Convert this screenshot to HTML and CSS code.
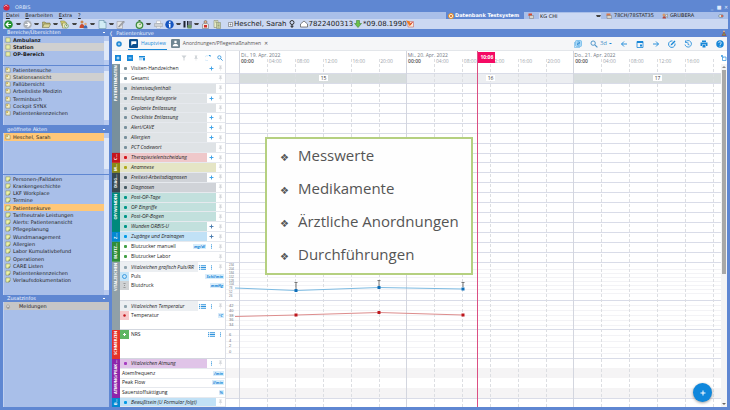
FILE: index.html
```html
<!DOCTYPE html>
<html lang="de">
<head>
<meta charset="utf-8">
<title>ORBIS</title>
<link rel="stylesheet" href="styles.css">
</head>
<body>
<svg class="defs" aria-hidden="true">
  <defs>
    <symbol id="back" viewBox="0 0 18 18"><circle cx="9" cy="9" r="8.500" fill="#238f31"/><path d="M14 9H5M9 4.500L4.500 9L9 13.500" fill="none" stroke="#fff" stroke-width="2.400"/></symbol>
    <symbol id="fwd" viewBox="0 0 18 18"><circle cx="9" cy="9" r="8.500" fill="#adb2b9"/><path d="M4 9h9M9 4.500L13.500 9L9 13.500" fill="none" stroke="#fff" stroke-width="2.400"/></symbol>
    <symbol id="folder" viewBox="0 0 18 18"><path d="M1 15V4h5l2 2h8v3" fill="#b9b676" stroke="#6d6b38"/><path d="M1 15L4 8h13l-3 7z" fill="#d9d79b" stroke="#6d6b38"/></symbol>
    <symbol id="docs" viewBox="0 0 18 18"><path d="M1 2h8l3 3v7H4z" fill="#d6cf6f" stroke="#77763f"/><path d="M5 6h8v10H5z" fill="#eee9b5" stroke="#77763f"/><circle cx="13" cy="12" r="4" fill="#e9f2e1" stroke="#4e8a3b"/><path d="M13 9.500V12h2" fill="none" stroke="#333"/></symbol>
    <symbol id="people" viewBox="0 0 18 18"><circle cx="6" cy="4" r="3" fill="#c9854d"/><path d="M1 16c0-11 10-11 10 0z" fill="#c84c30"/><circle cx="13" cy="8" r="2.500" fill="#e0ab7b"/><path d="M9 17c0-9 8-9 8 0z" fill="#3c6cb8"/></symbol>
    <symbol id="page" viewBox="0 0 18 18"><path d="M2 1h10l4 4v12H2z" fill="#d3edf5" stroke="#4e7f97"/><path d="M12 1v4h4" fill="none" stroke="#4e7f97"/></symbol>
    <symbol id="pencil" viewBox="0 0 18 18"><path d="M2 3h11v14H2z" fill="#e3e4e6" stroke="#8c8f94"/><path d="M6 12L15 2l2 2-9 9-3 1z" fill="#b0b2b6" stroke="#707377"/></symbol>
    <symbol id="timer" viewBox="0 0 18 18"><path d="M7 0h4v3H7z" fill="#3e6e3a"/><circle cx="9" cy="10" r="6.500" fill="#d8eecb" stroke="#3d8b3d" stroke-width="2.500"/><path d="M9 10l3-3" stroke="#222" stroke-width="1.500"/></symbol>
    <symbol id="printer" viewBox="0 0 18 18"><path d="M5 2h8v5H5zM5 11h8v5H5z" fill="#fff" stroke="#aaa"/><path d="M1 7h16v6H1z" fill="#cfd2d6" stroke="#9b9fa5"/></symbol>
    <symbol id="info" viewBox="0 0 18 18"><circle cx="9" cy="9" r="8.500" fill="#1555c0"/><path d="M8 3h3v3H8zM7 7.500h4V15H8V9H7z" fill="#fff"/></symbol>
    <symbol id="barcode" viewBox="0 0 18 18"><path d="M1 2h3v13H1zM5 2h1v13H5zM8 2h3v13H8zM12 2h1v13h-1zM15 2h2v13h-2z" fill="#1e2430"/><path d="M9 10h8v7H9z" fill="#6b9863"/></symbol>
    <symbol id="lock" viewBox="0 0 18 18"><circle cx="9" cy="4" r="3" fill="#e3b084" stroke="#555"/><path d="M3 17V9c0-3 12-3 12 0v8z" fill="#ece7e1" stroke="#666"/><path d="M6 10h6v5H6z" fill="#d2322d"/></symbol>
    <symbol id="copy" viewBox="0 0 18 18"><path d="M2 1h8v14H2z" fill="#e9edc9" stroke="#7b8062"/><path d="M7 5h8v12H7z" fill="#cfd8ae" stroke="#7b8062"/><path d="M9 8h4M9 11h4M9 14h4M4 4h4" stroke="#66724b"/></symbol>
    <symbol id="note" viewBox="0 0 14 14"><path d="M2 2h8l2 2v8H2z" fill="#f3eec4" stroke="#68633a"/><path d="M3 3h4v4H3z" fill="#c9b35a"/></symbol>
    <symbol id="box" viewBox="0 0 14 14"><path d="M2 2h10v10H2z" fill="#e9eca6" stroke="#6f7c4c"/></symbol>
    <symbol id="file" viewBox="0 0 14 14"><path d="M2 2h10v7l-3 3H2z" fill="#eef3a4" stroke="#66724a"/><path d="M9 12V9h3" fill="#8d9a50" stroke="#66724a"/></symbol>
    <symbol id="plus" viewBox="0 0 14 14"><path d="M7 1.500v11M1.500 7h11" stroke="currentColor" stroke-width="2.600"/></symbol>
    <symbol id="pin" viewBox="0 0 14 14"><path d="M4 1h6v1.500H9V6l2 2v1H3V8l2-2V2.500H4zM6.500 9h1v4.500h-1z" fill="currentColor"/></symbol>
    <symbol id="lens" viewBox="0 0 14 14"><circle cx="5.500" cy="5.500" r="3.800" fill="none" stroke="currentColor" stroke-width="1.700"/><path d="M8.500 8.500l4.500 4.500" stroke="currentColor" stroke-width="2"/></symbol>
    <symbol id="list" viewBox="0 0 14 10"><path d="M0 1.500h2.500M4 1.500h10M0 5h2.500M4 5h10M0 8.500h2.500M4 8.500h10" stroke="currentColor" stroke-width="1.800"/></symbol>
    <symbol id="dots" viewBox="0 0 4 14"><path d="M1 1h2v3H1zM1 5.500h2v3H1zM1 10h2v3H1z" fill="currentColor"/></symbol>
  </defs>
</svg>

<header class="titlebar">
  <svg class="i8" viewBox="0 0 16 16"><circle cx="8" cy="8" r="7" fill="#d4213a"/><path d="M3 6c3-4 6-3 8 0" fill="none" stroke="#fbd5da" stroke-width="2"/></svg>
  <h1>ORBIS</h1>
  <div class="winbtns"><button aria-label="Minimieren">_</button><button aria-label="Maximieren">■</button><button aria-label="Schließen">✕</button></div>
</header>

<div class="menubar">
  <nav><a href="#"><u>D</u>atei</a><a href="#"><u>B</u>earbeiten</a><a href="#"><u>E</u>xtra</a><a href="#"><u>?</u></a></nav>
  <div class="system"><svg class="i6" viewBox="0 0 12 12"><circle cx="6" cy="6" r="5" fill="#fff3dc" stroke="#e98b1c" stroke-width="2"/><path d="M4 4l4 4M8 4l-4 4" stroke="#c65c14" stroke-width="1.500"/></svg>Datenbank Testsystem</div>
  <div class="session">
    <svg class="i6" viewBox="0 0 12 12"><path d="M1 1h7v5H1z" fill="#d9482f"/><path d="M3 5h8v6H3z" fill="#d9d5cc" stroke="#777"/></svg>
    <label class="pick"><select aria-label="Arbeitsplatz"><option>KG CHI</option></select><span class="car"></span></label>
    <svg class="i6" viewBox="0 0 12 12"><path d="M1 1h8v5H1z" fill="#d6784d"/><path d="M2 5h9v6H2z" fill="#d9d5cc" stroke="#777"/></svg>
    <span class="ward">78CH/78STAT35</span>
    <svg class="i6" viewBox="0 0 12 12"><circle cx="4" cy="4" r="3" fill="#d69a6c"/><path d="M1 11c0-6 7-6 7 0z" fill="#b34a3e"/><path d="M6 5l5-3v7z" fill="#ece8e0" stroke="#777"/></svg>
    <span>GRUBERA</span>
    <svg class="i6 last" viewBox="0 0 12 12"><ellipse cx="6" cy="6" rx="5" ry="3" fill="#dfe8dc" stroke="#567"/><circle cx="8" cy="6" r="2" fill="#c43"/></svg>
  </div>
</div>

<div class="toolbar">
  <div class="tools">
    <button aria-label="Zurück"><svg><use href="#back"/></svg></button><span class="car"></span>
    <button aria-label="Vor"><svg><use href="#fwd"/></svg></button><span class="car"></span>
    <button aria-label="Öffnen"><svg><use href="#folder"/></svg></button><span class="car"></span>
    <button aria-label="Verlauf"><svg><use href="#docs"/></svg></button><span class="car"></span>
    <button aria-label="Patienten"><svg><use href="#people"/></svg></button><span class="car"></span>
    <button aria-label="Neu"><svg><use href="#page"/></svg></button><span class="car"></span>
    <button aria-label="Bearbeiten"><svg><use href="#pencil"/></svg></button><span></span>
    <button aria-label="Termine"><svg><use href="#timer"/></svg></button><span class="car"></span>
    <button aria-label="Drucken"><svg><use href="#printer"/></svg></button>
  </div>
  <div class="tools2">
    <button aria-label="Info"><svg><use href="#info"/></svg></button><span class="car"></span>
    <button aria-label="Barcode"><svg><use href="#barcode"/></svg></button><span class="car"></span>
    <button aria-label="Sperren"><svg><use href="#lock"/></svg></button>
    <button class="cp" aria-label="Kopieren"><svg><use href="#copy"/></svg></button>
  </div>
  <div class="patient">
    <svg class="i5" viewBox="0 0 10 10"><path d="M1 1h8v8H1zM3 5h4M5 3v4" fill="#f5f7fb" stroke="#555"/></svg>
    <span>Heschel, Sarah</span>
    <svg class="i8" viewBox="0 0 16 16"><circle cx="8" cy="5" r="4" fill="none" stroke="#222" stroke-width="1.800"/><path d="M8 9v7M5 12.500h6" stroke="#222" stroke-width="1.800"/></svg>
    <svg class="i8 house" viewBox="0 0 16 16"><path d="M1 14V8l7-6 7 6v6z" fill="#fff" stroke="#555" stroke-width="1.400"/></svg>
    <span>7822400313</span>
    <svg class="i8" viewBox="0 0 16 16"><path d="M5 1h6v6h4l-7 8-7-8h4z" fill="#6cc04a" stroke="#2f7a2a"/></svg>
    <span>*09.08.1990</span>
    <svg class="i8 flag" viewBox="0 0 16 16"><path d="M4 3h11v11H4z" fill="#fbe9d6" stroke="#b55"/><path d="M0 1l6 1 5 7-4 3z" fill="#ef7a21"/><path d="M9 9l4-5" stroke="#c22" stroke-width="2"/></svg>
  </div>
</div>

<div class="work">
  <aside>
    <h2>Bereiche/Übersichten<i></i></h2>
    <div class="pane areas"><ul class="bold">
      <li><svg><use href="#box"/></svg>Ambulanz</li><li class="gray"><svg><use href="#box"/></svg>Station</li><li><svg><use href="#box"/></svg>OP-Bereich</li>
    </ul><div class="sb"></div></div>
    <div class="pane views"><ul>
      <li><svg><use href="#note"/></svg>Patientensuche</li><li class="gray"><svg><use href="#note"/></svg>Stationsansicht</li><li><svg><use href="#note"/></svg>Fallübersicht</li><li><svg><use href="#note"/></svg>Arbeitsliste Medizin</li><li><svg><use href="#note"/></svg>Terminbuch</li><li><svg><use href="#note"/></svg>Cockpit SYNX</li><li><svg><use href="#note"/></svg>Patientenkennzeichen</li>
    </ul><div class="sb"></div></div>
    <h2 class="mid">geöffnete Akten<i></i></h2>
    <div class="pane open"><ul>
      <li class="hot"><svg><use href="#note"/></svg>Heschel, Sarah</li>
    </ul><div class="sb"></div></div>
    <div class="pane record"><ul>
      <li><svg><use href="#file"/></svg>Personen-/Falldaten</li><li><svg><use href="#file"/></svg>Krankengeschichte</li><li><svg><use href="#file"/></svg>LKF Workplace</li><li><svg><use href="#file"/></svg>Termine</li><li class="hot"><svg><use href="#file"/></svg>Patientenkurve</li><li><svg><use href="#file"/></svg>Tarifneutrale Leistungen</li><li><svg><use href="#file"/></svg>Alerts: Patientenansicht</li><li><svg><use href="#file"/></svg>Pflegeplanung</li><li><svg><use href="#file"/></svg>Wundmanagement</li><li><svg><use href="#file"/></svg>Allergien</li><li><svg><use href="#file"/></svg>Labor Kumulativbefund</li><li><svg><use href="#file"/></svg>Operationen</li><li><svg><use href="#file"/></svg>CARE Listen</li><li><svg><use href="#file"/></svg>Patientenkennzeichen</li><li><svg><use href="#file"/></svg>Verlaufsdokumentation</li>
    </ul><div class="sb"></div></div>
    <h2>Zusatzinfos<i></i></h2>
    <div class="pane extra"><ul><li class="msg"><svg viewBox="0 0 14 14"><path d="M3 10c2-8 6-8 8 0zM6 11h3v2H6z" fill="#ddd" stroke="#777"/></svg>Meldungen</li></ul></div>
  </aside>

  <main>
    <h2 class="cap"><span class="fold">❬</span>Patientenkurve<svg class="i6" viewBox="0 0 12 12"><circle cx="6" cy="3" r="2" fill="#dcb087"/><path d="M2 11l4-7 4 7z" fill="#7e9a4b" stroke="#a33"/></svg></h2>
    <div class="tabs">
      <button class="add" aria-label="Hinzufügen"><svg class="i6" viewBox="0 0 12 12"><circle cx="6" cy="6" r="5.500" fill="#1c86d4"/><path d="M6 3.500v5M3.500 6h5" stroke="#fff" stroke-width="1.300"/></svg></button>
      <button class="tab on"><svg viewBox="0 0 16 16"><rect width="16" height="16" rx="2" fill="#0b4f8f"/><path d="M4 4h9v5H7l-3 3z" fill="#fff"/></svg>Hauptview</button>
      <button class="tab"><svg viewBox="0 0 16 16"><rect width="16" height="16" rx="2" fill="#6f8591"/><path d="M6 3h4v4H6zM3 13c0-6 10-6 10 0z" fill="#fff"/></svg>Anordnungen/Pflegemaßnahmen<span class="x">✕</span></button>
      <div class="acts">
        <button aria-label="Ansichten"><svg viewBox="0 0 16 16"><path d="M1 4v11h11" fill="none" stroke="#3da0e3"/><rect x="3" y="1" width="12" height="12" rx="2" fill="#a9d8f7" stroke="#3da0e3"/><path d="M7 4h4v3H7v3h4" fill="none" stroke="#1c7fcc" stroke-width="1.300"/></svg></button>
        <button class="zoom"><svg viewBox="0 0 14 14"><use href="#lens"/></svg>3d<span class="chev"></span></button>
        <button aria-label="Zurück"><svg viewBox="0 0 16 16"><path d="M14 8H3M8 3L3 8l5 5" fill="none" stroke="currentColor" stroke-width="1.800"/></svg></button>
        <button aria-label="Kalender"><svg viewBox="0 0 16 16"><path d="M2 3h12v12H2z" fill="none" stroke="currentColor" stroke-width="1.600"/><path d="M2 2h12v4H2zM8 9h4v4H8z" fill="currentColor"/></svg></button>
        <button aria-label="Weiter"><svg viewBox="0 0 16 16"><path d="M2 8h11M8 3l5 5-5 5" fill="none" stroke="currentColor" stroke-width="1.800"/></svg></button>
        <button aria-label="Bearbeiten"><svg viewBox="0 0 16 16"><path d="M14 7a6.500 6.500 0 1 1-5-5" fill="none" stroke="currentColor" stroke-width="1.800"/><path d="M5 11l1-3 7-7 2 2-7 7z" fill="currentColor"/></svg></button>
        <button aria-label="Verlauf"><svg viewBox="0 0 16 16"><path d="M3 4a6.500 6.500 0 1 1-1 5M3 1v4h4M8 5v4l3 1" fill="none" stroke="currentColor" stroke-width="1.600"/></svg></button>
        <button aria-label="Drucken"><svg viewBox="0 0 16 16"><path d="M4 1h8v3H4zM1 5h14v7h-3V9H4v3H1zM5 10h6v5H5z" fill="currentColor"/></svg></button>
        <button aria-label="Hilfe"><svg viewBox="0 0 16 16"><circle cx="8" cy="8" r="7.500" fill="currentColor"/><path d="M5.500 6c0-4 5-3 5 0 0 2-2.500 2-2.500 4M8 11.500v2" fill="none" stroke="#fff" stroke-width="1.600"/></svg></button>
      </div>
    </div>

    <div class="board">
      <section class="left">
        <div class="filter">
          <button aria-label="Aufklappen"><svg viewBox="0 0 12 12"><path d="M0 0h12v12H0z" fill="#1787d8"/><path d="M6 3v6M3 6h6" stroke="#fff" stroke-width="1.600"/></svg></button>
          <button aria-label="Zuklappen"><svg viewBox="0 0 12 12"><path d="M0 0h12v12H0z" fill="#1787d8"/><path d="M3 6h6" stroke="#fff" stroke-width="1.600"/></svg></button>
          <button aria-label="Kompakt"><svg viewBox="0 0 12 12"><path d="M0 2h12v3H0z" fill="#1787d8"/><path d="M0 6.500h7M0 9.500h7" stroke="#7bbcec" stroke-width="1.500"/><path d="M8 6h4v5H8z" fill="#1787d8"/></svg></button>
          <span class="push"></span>
          <button class="dim" aria-label="Filter"><svg viewBox="0 0 12 12"><path d="M1 1h10L7 6v5H5V6z" fill="currentColor"/></svg></button>
          <button class="dim" aria-label="Anheften"><svg viewBox="0 0 14 14"><use href="#pin"/></svg></button>
          <button aria-label="Aktualisieren"><svg viewBox="0 0 12 12"><path d="M6 11a5 5 0 1 1 0-9" fill="none" stroke="#b9dcf5" stroke-width="1.200"/><path d="M7 0h4v4z" fill="#1787d8"/></svg></button>
          <button aria-label="Suchen"><svg viewBox="0 0 14 14"><use href="#lens"/></svg></button>
        </div>
        <div class="grid20">
          <div class="side s9 slate">PATIENTENDATEN</div><div class="side s1 red">C…</div><div class="side s1 olive">M…</div><div class="side s2 ink">DIAG…</div><div class="side s4 teal">OP/WUNDEN</div><div class="side s1 blue">Z…</div><div class="side s2 green">BLUTZ…</div>
          <div class="row p"><b>Visiten-Handzeichen</b><svg class="pl"><use href="#plus"/></svg><svg class="pn"><use href="#pin"/></svg></div>
          <div class="row p"><b>Gesamt</b><svg class="pn"><use href="#pin"/></svg></div>
          <div class="row g"><b>Intensivaufenthalt</b><svg class="pn"><use href="#pin"/></svg></div>
          <div class="row g"><b>Einstufung Kategorie</b><svg class="pl"><use href="#plus"/></svg><svg class="pn"><use href="#pin"/></svg></div>
          <div class="row g"><b>Geplante Entlassung</b><svg class="pn"><use href="#pin"/></svg></div>
          <div class="row g"><b>Checkliste Entlassung</b><svg class="pl"><use href="#plus"/></svg><svg class="pn"><use href="#pin"/></svg></div>
          <div class="row g"><b>Alert/CAVE</b><svg class="pl"><use href="#plus"/></svg><svg class="pn"><use href="#pin"/></svg></div>
          <div class="row g"><b>Allergien</b><svg class="pl"><use href="#plus"/></svg><svg class="pn"><use href="#pin"/></svg></div>
          <div class="row g"><b>PCT Codewort</b><svg class="pn"><use href="#pin"/></svg></div>
          <div class="row r"><b>Therapiezielentscheidung</b><svg class="pl"><use href="#plus"/></svg><svg class="pn"><use href="#pin"/></svg></div>
          <div class="row o"><b>Anamnese</b><svg class="pn"><use href="#pin"/></svg></div>
          <div class="row k"><b>Freitext-Arbeitsdiagnosen</b><svg class="pl"><use href="#plus"/></svg><svg class="pn"><use href="#pin"/></svg></div>
          <div class="row k"><b>Diagnosen</b><svg class="pn"><use href="#pin"/></svg></div>
          <div class="row t"><b>Post-OP-Tage</b><svg class="pn"><use href="#pin"/></svg></div>
          <div class="row t"><b>OP Eingriffe</b><svg class="pn"><use href="#pin"/></svg></div>
          <div class="row t"><b>Post-OP-Bogen</b><svg class="pn"><use href="#pin"/></svg></div>
          <div class="row t"><b>Wunden ORBIS-U</b><svg class="pl dk"><use href="#plus"/></svg><svg class="pn"><use href="#pin"/></svg></div>
          <div class="row z"><b>Zugänge und Drainagen</b><svg class="pl dk"><use href="#plus"/></svg><svg class="pn"><use href="#pin"/></svg></div>
          <div class="row p gr"><b>Blutzucker manuell</b><em>mg/dl</em><svg class="dt"><use href="#dots"/></svg><svg class="pn"><use href="#pin"/></svg></div>
          <div class="row p gr"><b>Blutzucker Labor</b><svg class="pn"><use href="#pin"/></svg></div>
        </div>
        <div class="vitals">
          <div class="side slate2">VITALZEICHEN</div>
          <div class="grp puls">
            <div class="row v"><b>Vitalzeichen grafisch Puls/RR</b><svg class="ls"><use href="#list"/></svg><svg class="dt"><use href="#dots"/></svg><svg class="pn"><use href="#pin"/></svg></div>
            <div class="row m"><svg class="sq" viewBox="0 0 18 18"><path d="M0 0h18v18H0z" fill="#c5e5f8"/><circle cx="9" cy="9" r="4" fill="none" stroke="#1787d8" stroke-width="1.500"/></svg><b>Puls</b><em>Schl/min</em></div>
            <div class="row m"><svg class="sq" viewBox="0 0 18 18"><path d="M0 0h18v18H0z" fill="#cfd2d4"/><path d="M7 4l2 2 2-2M7 14l2-2 2 2M8 9h2" fill="none" stroke="#555"/></svg><b>Blutdruck</b><em>mmHg</em></div>
          </div>
          <div class="grp temp">
            <div class="row v"><b>Vitalzeichen Temperatur</b><svg class="ls"><use href="#list"/></svg><svg class="dt"><use href="#dots"/></svg><svg class="pn"><use href="#pin"/></svg></div>
            <div class="row m"><svg class="sq" viewBox="0 0 18 18"><path d="M0 0h18v18H0z" fill="#f6c9cb"/><circle cx="9" cy="9" r="2.500" fill="#c4161c"/></svg><b>Temperatur</b><em>°C</em></div>
          </div>
        </div>
        <div class="pain">
          <div class="side scarlet">SCHMERZEN</div>
          <div class="grp"><div class="row m"><svg class="sq" viewBox="0 0 18 18"><path d="M0 0h18v18H0z" fill="#5fb663"/><path d="M9 6v6M6 9h6" stroke="#fff" stroke-width="2"/></svg><b>NRS</b><svg class="ls"><use href="#list"/></svg><svg class="dt"><use href="#dots"/></svg></div></div>
        </div>
        <div class="breath">
          <div class="side purple">ATMUNG/PEAK …</div>
          <div class="grp4">
            <div class="row a"><b>Vitalzeichen Atmung</b><svg class="dt"><use href="#dots"/></svg><svg class="pn"><use href="#pin"/></svg></div>
            <div class="row n"><b>Atemfrequenz</b><em>/min</em></div>
            <div class="row n"><b>Peak Flow</b><em>l/min</em></div>
            <div class="row n"><b>Sauerstoffsättigung</b><em>%</em></div>
          </div>
        </div>
        <div class="mind">
          <div class="side blue">B…</div>
          <div class="row z w"><b>Bewußtsein (U Formular folgt)</b><svg class="pn"><use href="#pin"/></svg></div>
        </div>
      </section>

      <section class="chart">
        <svg class="plot" viewBox="0 0 495 356" preserveAspectRatio="none">
          <path d="M0 22h14v10H0zM181 22h167v10H181z" fill="#eceef1"/><path d="M14 22h167v10H14zM348 22h147v10H348z" fill="#d7dddd"/>
          <path d="M0 317h495v10H0zM0 337h495v10H0z" fill="#f5f4f5"/>
          <path d="M0 22.500h495M0 32.500h495M0 42.500h495M0 52.500h495M0 62.500h495M0 72.500h495M0 82.500h495M0 92.500h495M0 102.500h495M0 111.500h495M0 121.500h495M0 131.500h495M0 141.500h495M0 151.500h495M0 161.500h495M0 171.500h495M0 181.500h495M0 191.500h495M0 201.500h495M0 211.500h495M0 249.500h495M0 278.500h495M0 307.500h495M0 347.500h495" stroke="#d9dce8"/>
          <path d="M0 218.500h495M0 222.500h495M0 226.500h495M0 230.500h495M0 234.500h495M0 238.500h495M0 242.500h495M0 254.500h495M0 259.500h495M0 264.500h495M0 269.500h495M0 274.500h495M0 284.500h495M0 290.500h495M0 296.500h495M0 302.500h495" stroke="#f3f3f6"/>
          <path d="M13.500 0v356M180.500 0v356M347.500 0v356" stroke="#d3d6df"/>
          <path d="M41.500 8v348M69.500 8v348M97.500 8v348M125.500 8v348M153.500 8v348M208.500 8v348M236.500 8v348M264.500 8v348M292.500 8v348M320.500 8v348M375.500 8v348M403.500 8v348M431.500 8v348M459.500 8v348M487.500 8v348" stroke="#dcdee2" stroke-dasharray="3 2"/>
          <path d="M9 237l61 2.500 83-3 84 1.500" fill="none" stroke="#7dbbe2"/>
          <path d="M68.500 238h3v3h-3zM151.500 235h3v3h-3zM235.500 236.500h3v3h-3z" fill="#0d6db7"/>
          <path d="M70 231v7M68.500 231.500h3M153 229v6M151.500 229.500h3M237 231v5M235.500 231.500h3" stroke="#777"/>
          <path d="M9 265.500l61-1.500 83-2.500 84 2.500" fill="none" stroke="#dd8d8d"/>
          <path d="M68.500 262.500h3v3h-3zM151.500 260h3v3h-3zM235.500 262.500h3v3h-3z" fill="#bd171d"/>
          <path d="M251.500 0v356" stroke="#dc4f83"/>
        </svg>
        <div class="days"><time>Di., 19. Apr. 2022</time><time>Mi., 20. Apr. 2022</time><time>Do., 21. Apr. 2022</time></div>
        <div class="hours"><b>00:00</b><span>04:00</span><span>08:00</span><span>12:00</span><span>16:00</span><span>20:00</span><b>00:00</b><span>04:00</span><span>08:00</span><span>12:00</span><span>16:00</span><span>20:00</span><b>00:00</b><span>04:00</span><span>08:00</span><span>12:00</span><span>16:00</span></div>
        <div class="weeks"><span>15</span><span>16</span><span>17</span></div>
        <div class="axis a1"><i>234</i><i>204</i><i>184</i><i>152</i><i>128</i><i>104</i><i>78</i><i>52</i><i>26</i></div>
        <div class="axis a2"><i>42</i><i>40</i><i>38</i><i>36</i><i>34</i></div>
        <div class="axis a3"><i>6</i><i>4</i><i>2</i><i>0</i></div>
        <div class="now"><mark>10:06</mark></div>
        <div class="callout"><ul><li>Messwerte</li><li>Medikamente</li><li>Ärztliche Anordnungen</li><li>Durchführungen</li></ul></div>
        <button class="fab" aria-label="Neuer Eintrag"><svg viewBox="0 0 12 12"><path d="M6 1v10M1 6h10" stroke="#fff" stroke-width="2"/></svg></button>
      </section>
      <div class="scroll"><button aria-label="Extern öffnen"><svg viewBox="0 0 12 12"><path d="M3 4h7v7H3zM1 1l4 4M1 1h3M1 1v3" fill="none" stroke="#1787d8" stroke-width="1.300"/></svg></button><i class="up"></i><span class="thumb"></span><i class="down"></i></div>
    </div>
  </main>
</div>
</body>
</html>
```
FILE: styles.css
```css
* { box-sizing: border-box; }
body {
  margin: 0;
  min-height: 100vh;
  display: flex;
  flex-direction: column;
  background: #5f87d2;
  color: #222;
  font: 5px/7px "DejaVu Sans", Verdana, sans-serif;
  overflow: hidden;
}
h1, h2, ul { margin: 0; padding: 0; font-size: inherit; font-weight: normal; list-style: none; }
button { all: unset; display: flex; align-items: center; justify-content: center; cursor: pointer; }
svg { display: block; flex: none; }
a { color: inherit; text-decoration: none; }
.defs { position: absolute; width: 0; height: 0; }
.i5 { width: 5px; height: 5px; }
.i6 { width: 6px; height: 6px; }
.i8 { width: 8px; height: 8px; }

.titlebar { display: flex; align-items: center; gap: 5px; height: 12px; padding: 2px 2px 0 3px; color: #dfe9fb; }
.titlebar svg { width: 7px; height: 7px; }
.winbtns { display: flex; gap: 3px; margin-left: auto; }
.winbtns button { width: 4px; }

.menubar { display: flex; height: 7px; margin: 0 2px 0 3px; background: #a9bfe9; }
.menubar nav { display: flex; gap: 6px; padding-left: 3px; flex: 1; }
.system { display: flex; align-items: center; gap: 1px; width: 78px; padding-left: 2px; background: #5f87d2; color: #fff; font-weight: bold; white-space: nowrap; }
.session { display: flex; align-items: center; width: 204px; padding-left: 4px; gap: 2px; }
.pick { display: flex; align-items: center; width: 62px; margin: 0 3px; background: #ccd9f3; }
.pick select { flex: 1; min-width: 0; height: 6px; padding: 0 1px; border: 0; appearance: none; background: none; font: inherit; line-height: 6px; color: #222; }
.pick .car { width: 5px; }
.ward { margin-right: 6px; }
.last { margin-left: auto; margin-right: 4px; }

.toolbar { display: flex; height: 10px; margin: 0 2px 0 3px; background: #cbd8f2; }
.tools { display: grid; grid-template-columns: repeat(17, 1fr); width: 160px; padding-left: 1px; align-items: center; }
.tools2 { display: flex; align-items: center; margin-left: 2px; }
.tools2 > * { width: 9px; }
.tools svg, .tools2 svg { width: 9px; height: 9px; }
.tools2 .cp { margin-left: 3px; }
.car::before { content: ""; display: block; width: 3px; margin: 0 auto; border: 1px solid transparent; border-top: 2px solid #444; border-bottom: 0; }
.patient { display: flex; align-items: center; gap: 1px; padding-left: 6px; font-size: 7px; white-space: nowrap; }
.patient .house { margin-left: 3px; }
.patient .flag { margin-left: -2px; }

.work { display: flex; flex: 1; min-height: 0; padding-bottom: 3px; }
aside { display: flex; flex-direction: column; width: 109px; padding-left: 3px; }
aside h2 { display: flex; align-items: center; justify-content: space-between; height: 7px; padding: 0 4px; color: #f1f5fd; }
aside .mid { height: 8px; }
aside h2 i { width: 2px; height: 1px; background: #fff; }
.pane { display: flex; border-left: 1px solid #c0d0f0; background: #a9bfe9; }
.pane ul { flex: 1; display: grid; grid-auto-rows: 1fr; align-content: start; }
.pane li { display: flex; align-items: center; gap: 2px; min-height: 0; padding-left: 1px; line-height: 6px; white-space: nowrap; }
.pane li svg { width: 6px; height: 6px; }
.bold { font-weight: bold; }
.gray { background: #d0d0d0; }
.hot { background: #ffc777; }
.sb { display: flex; width: 5px; background: #dfe8f8; border: solid #b9cbf0; border-width: 5px 0; }
.areas { height: 29px; margin-bottom: 1px; }
.areas ul { height: 22px; }
.views { height: 59px; }
.views ul { height: 51px; }
.open { height: 41px; margin-bottom: 1px; }
.open ul { height: 8px; }
.record { height: 120px; }
.record ul { height: 109px; }
.extra { flex: 1; }
.extra ul { height: 8px; }
.pane .msg { gap: 8px; background: #c6c6c6; }

main { flex: 1; min-width: 0; display: flex; flex-direction: column; padding: 0 3px 0 0; font-family: "Open Sans", "Noto Sans", sans-serif; }
.cap { display: flex; align-items: center; gap: 3px; height: 8px; color: #eaf1fd; font-family: "DejaVu Sans", sans-serif; }
.cap svg { margin-left: auto; }
.tabs { display: flex; height: 14px; margin-left: 3px; background: #f5f6f8; color: #555; white-space: nowrap; border-bottom: 1px solid #e3e6ea; }
.tabs .add { width: 14px; }
.tab { gap: 2px; padding: 0 1px; margin-left: 2px; border-bottom: 1px solid transparent; font-size: 5px; }
.tab svg { width: 9px; height: 9px; margin-right: 1px; }
.tab.on { color: #1787d8; border-bottom-color: #1787d8; }
.tab + .tab { margin-left: 3px; }
.x { font-size: 5px; margin-left: 1px; }
.acts { display: flex; gap: 8px; margin: 0 3px 0 auto; color: #1787d8; }
.acts svg { width: 8px; height: 8px; }
.zoom { gap: 2px; font-size: 6px; color: #4b94c9; }
.chev { width: 3px; border: 1px solid transparent; border-top: 1px solid #1787d8; border-bottom: 0; }

.board { flex: 1; display: grid; grid-template-columns: 114px 1fr 6px; margin-left: 3px; background: #fff; min-height: 0; }
.left { display: flex; flex-direction: column; border-right: 1px solid #dcdfe6; min-width: 0; }
.filter { display: flex; align-items: center; gap: 6px; height: 13px; padding: 0 2px 0 3px; color: #1787d8; }
.filter svg { width: 6px; height: 6px; }
.filter .dim { color: #cdd2d6; }
.push { flex: 1; }
.grid20 { display: grid; grid-template: repeat(20, 1fr) / 8px 1fr; grid-auto-flow: column; height: 198px; }
.side { writing-mode: vertical-rl; transform: rotate(180deg); text-align: right; color: #fff; font-size: 4px; font-weight: bold; line-height: 8px; overflow: hidden; padding: 1px 0; min-height: 0; white-space: nowrap; }
.s9 { grid-row: span 9; }
.s4 { grid-row: span 4; }
.s2 { grid-row: span 2; }
.slate { background: #78909c; }
.slate2 { background: #90a0a8; }
.red { background: #c4161c; }
.olive { background: #8a8a14; }
.ink { background: #37474f; }
.teal { background: #00897b; }
.blue { background: #0288d1; }
.green { background: #2f8d38; }
.scarlet { background: #e5332a; }
.purple { background: #8e24aa; }

.row { --tint: #fff; --dot: #78909c; display: flex; align-items: center; min-width: 0; min-height: 0; color: #222; border-bottom: 1px solid #e6e9ee; overflow: hidden; }
.row b { flex: 1; align-self: stretch; display: flex; align-items: center; min-width: 0; background: var(--tint); font-weight: 400; white-space: nowrap; line-height: 7px; }
.row b::before { content: ""; width: 3px; height: 3px; margin: 0 4px 0 4px; background: var(--dot); border-radius: 1px; }
.row svg { height: 5px; }
.pl { width: 9px; color: #3ba0e6; }
.pl.dk { color: #4779ad; }
.row .pn { width: 9px; height: 6px; color: #d3d6da; }
.dt { width: 9px; color: #1787d8; }
.ls { width: 9px; color: #1787d8; }
.row em { padding: 0 1px; margin-right: 1px; background: #d8edfb; color: #1787d8; font-size: 4px; line-height: 5px; font-weight: bold; }
.g, .v, .r, .o, .k, .t, .z, .a { font-style: italic; }
.g { --tint: #dfe3e6; }
.v { --tint: #eceff2; --dot: #90a4ae; }
.r { --tint: #efc8ca; --dot: #d4161c; }
.o { --tint: #e5e5c5; --dot: #afa91c; }
.k { --tint: #d0d3d8; --dot: #455a64; }
.t { --tint: #c2e0dd; --dot: #009688; }
.z { --tint: #c1e1f6; --dot: #039be5; }
.a { --tint: #e0c4e8; --dot: #a63cc0; }
.gr { --dot: #43a047; }
.vitals, .pain, .breath, .mind { display: grid; grid-template-columns: 8px 1fr; }
.vitals { grid-template-rows: 39px 29px; height: 68px; }
.vitals .side { grid-row: span 2; }
.grp { border-bottom: 1px solid #d3d7df; min-width: 0; }
.grp .row { height: 9px; border-bottom: 0; }
.grp .v { height: 10px; }
.m .sq { width: 9px; height: 9px; }
.m b::before { width: 0; margin: 0 2px 0 0; }
.pain { height: 29px; }
.breath { height: 39px; }
.grp4 { display: grid; grid-template-rows: repeat(4, 1fr); min-width: 0; }
.n b::before { width: 0; margin: 0 2px 0 0; }
.mind { flex: 1; }

.chart { position: relative; display: flex; flex-direction: column; min-width: 0; }
.plot { position: absolute; inset: 0; width: 100%; height: 356px; }
.days, .hours, .weeks, .axis { position: relative; color: #70777f; white-space: nowrap; }
.days { display: grid; grid-template-columns: 167fr 167fr 147fr; padding-left: 15px; height: 7px; line-height: 8px; }
.hours { display: grid; grid-template-columns: repeat(17, 279fr) 76fr; padding-left: 14px; height: 7px; line-height: 7px; color: #a0a5ab; }
.hours > * { min-width: 0; padding-left: 1px; }
.hours b { color: #555; font-weight: 600; }
.weeks { display: grid; grid-template-columns: 167fr 167fr 167fr; margin: 8px -20px 0 14px; height: 10px; align-items: center; justify-items: center; }
.weeks span { padding: 0 2px; background: #fff; color: #333; line-height: 6px; }
.axis { display: flex; flex-direction: column; justify-content: space-between; width: 8px; padding-left: 3px; font: 4px/3px "Liberation Sans", sans-serif; }
.axis i { font-style: normal; }
.a1 { height: 34px; margin-top: 181px; font-size: 3px; }
.a2 { height: 22px; margin-top: 6px; }
.a3 { height: 20px; margin-top: 7px; }
.now { position: absolute; top: 1px; left: 51%; }
.now mark { display: block; padding: 2px; background: #f50a64; color: #fff; font-weight: bold; line-height: 7px; }
.callout { position: absolute; left: 39px; top: 86px; width: 208px; height: 138px; padding: 0 0 0 13px; border: 2px solid #b5d080; background: #fefefe; color: #555; font-size: 15px; line-height: 33px; white-space: nowrap; }
.callout li::before { content: "❖"; display: inline-block; width: 18px; font: 10px/10px "DejaVu Sans", sans-serif; }
.fab { position: absolute; right: 9px; bottom: 5px; width: 19px; height: 19px; border-radius: 50%; background: #0f87dc; box-shadow: 0 1px 3px #0006; }
.fab svg { width: 6px; height: 6px; }
.scroll { display: flex; flex-direction: column; align-items: center; background: #f4f4f5; }
.scroll button { height: 13px; width: 6px; background: #fff; }
.scroll svg { width: 6px; height: 6px; }
.up, .down { width: 4px; margin: 2px 0; border: 2px solid transparent; }
.up { border-bottom-color: #888; border-top: 0; }
.down { border-top-color: #666; border-bottom: 0; margin-top: auto; }
.thumb { width: 4px; height: 204px; background: #a8a8a8; }
```
